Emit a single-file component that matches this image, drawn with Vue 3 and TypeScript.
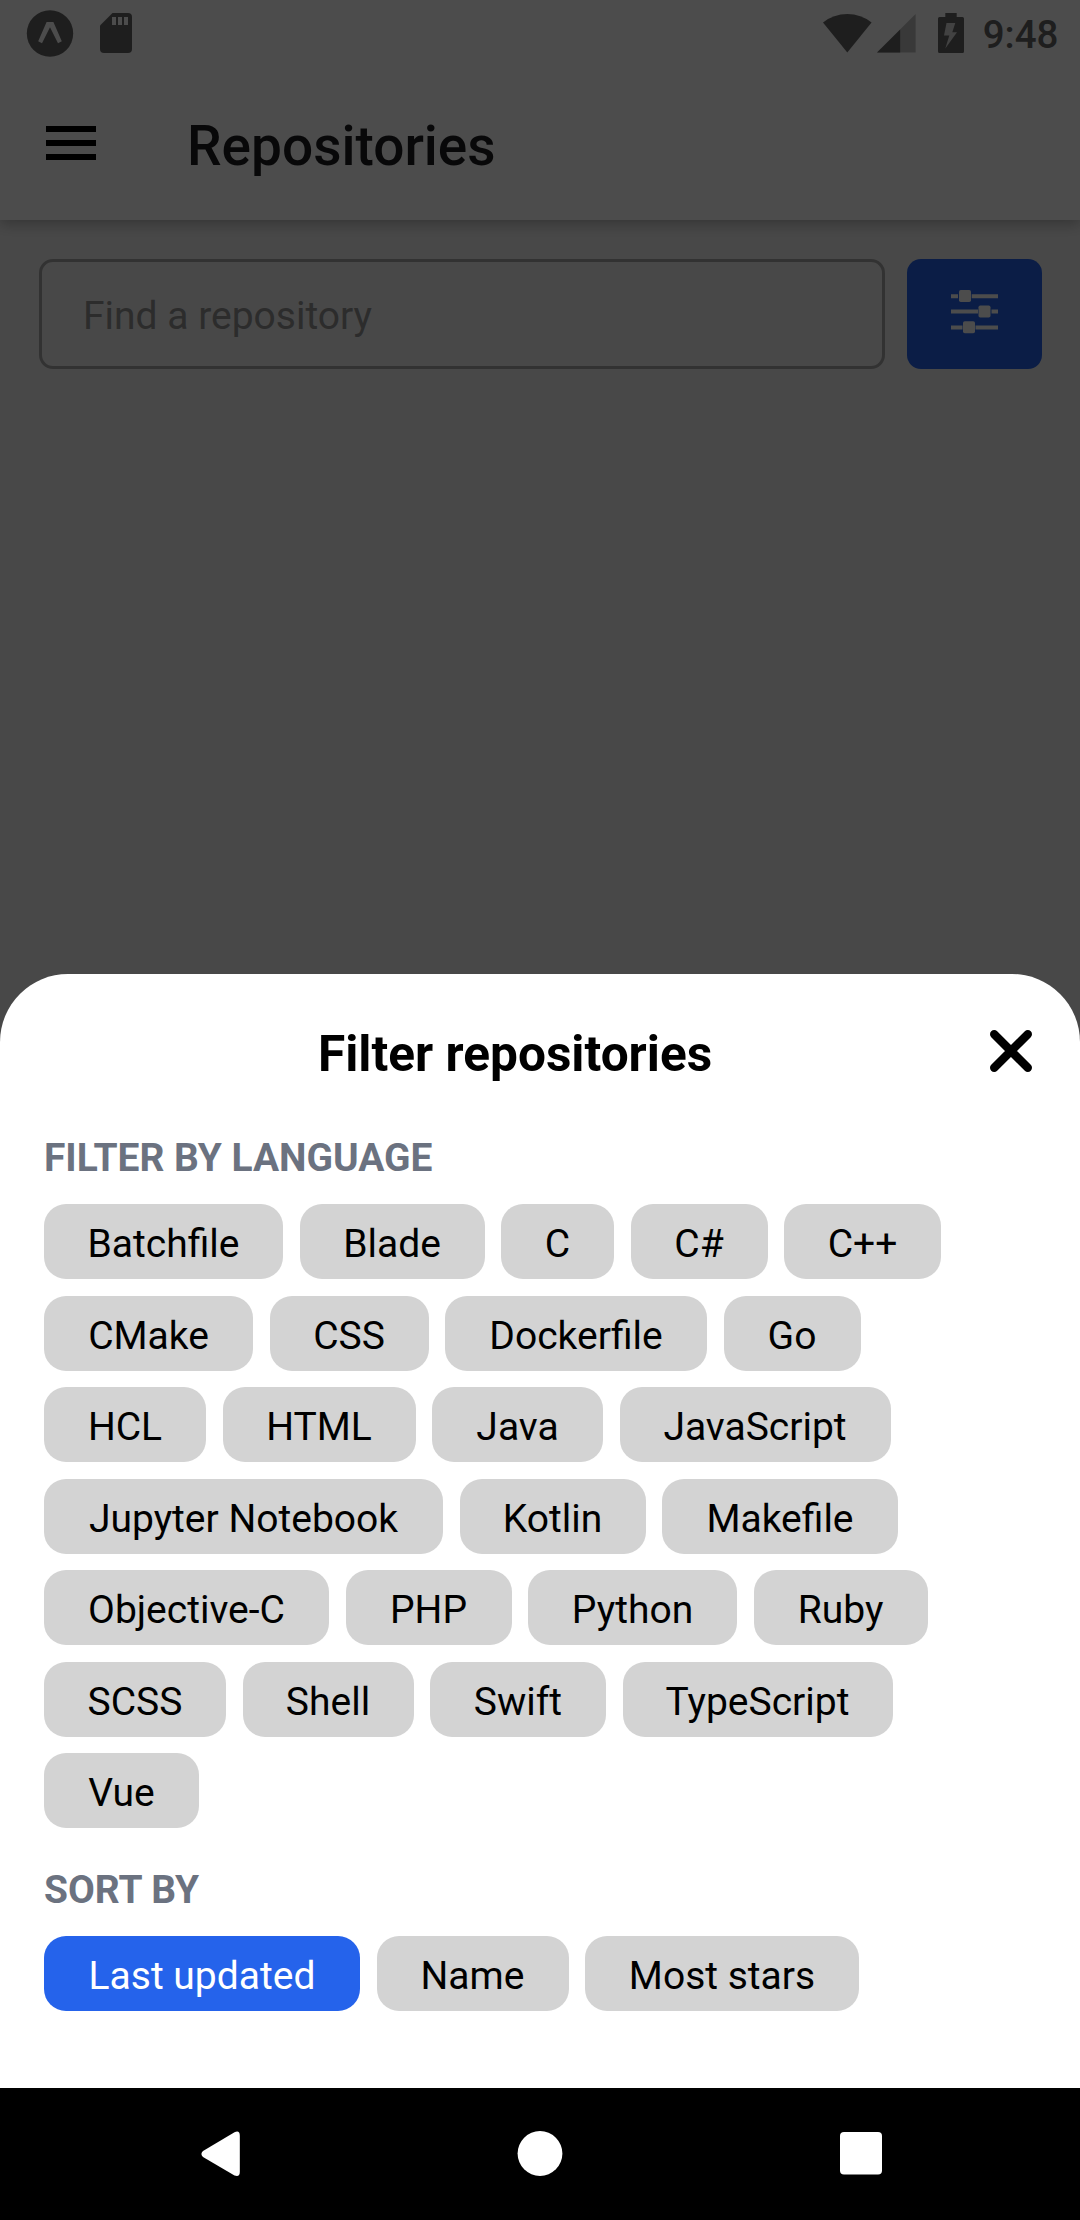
<script setup lang="ts">
import { ref } from 'vue'

interface Option {
  name: string
  width: number
}

const languages: Option[] = [
  { name: 'Batchfile', width: 239 },
  { name: 'Blade', width: 185 },
  { name: 'C', width: 113 },
  { name: 'C#', width: 137 },
  { name: 'C++', width: 157 },
  { name: 'CMake', width: 209 },
  { name: 'CSS', width: 159 },
  { name: 'Dockerfile', width: 262 },
  { name: 'Go', width: 137 },
  { name: 'HCL', width: 162 },
  { name: 'HTML', width: 193 },
  { name: 'Java', width: 171 },
  { name: 'JavaScript', width: 271 },
  { name: 'Jupyter Notebook', width: 399 },
  { name: 'Kotlin', width: 186 },
  { name: 'Makefile', width: 236 },
  { name: 'Objective-C', width: 285 },
  { name: 'PHP', width: 166 },
  { name: 'Python', width: 209 },
  { name: 'Ruby', width: 174 },
  { name: 'SCSS', width: 182 },
  { name: 'Shell', width: 171 },
  { name: 'Swift', width: 176 },
  { name: 'TypeScript', width: 270 },
  { name: 'Vue', width: 155 },
]
const sorts: Option[] = [
  { name: 'Last updated', width: 316 },
  { name: 'Name', width: 192 },
  { name: 'Most stars', width: 274 },
]

const language = ref<string | null>(null)
const sort = ref<string>('Last updated')
</script>

<template>
  <div class="screen">
    <header class="top">
      <div class="status">
        <svg class="expo" width="48" height="48" viewBox="0 0 48 48">
          <circle cx="24" cy="23.5" r="23.2" fill="#666" />
          <path d="M20.6 12h6.8l8.4 19.2-3.8 2L24 17.2l-8 16-3.8-2z" fill="#fff" />
        </svg>
        <svg class="sd" width="32" height="40" viewBox="0 0 32 40">
          <path d="M12.5 0H28q4 0 4 4v32q0 4-4 4H4q-4 0-4-4V12.5z" fill="#666" />
          <path d="M12 4h4v8h-4zM18 4h4v8h-4zM24 4h4v8h-4z" fill="#fff" />
        </svg>
        <svg class="wifi" width="49" height="39" viewBox="0 0 49 39">
          <path d="M24.3 38.5L0 8.5Q10.5 0 24.3 0T48.6 8.5z" fill="#666" />
        </svg>
        <svg class="signal" width="39" height="39" viewBox="0 0 39 39">
          <path d="M38.6 0V38.6H0z" fill="#c0c0c0" />
          <path d="M23.2 15.4V38.6H0z" fill="#666" />
        </svg>
        <svg class="battery" width="26" height="40" viewBox="0 0 26 40">
          <path d="M7.3 0h11.4v4H24.5q1.5 0 1.5 1.5v33q0 1.5-1.5 1.5h-23q-1.5 0-1.5-1.5v-33q0-1.5 1.5-1.5H7.3z" fill="#666" />
          <path d="M8.5 10h8.8l-3 9.2H19L7.3 35.5 11.3 22.500H6z" fill="#dcdcdc" />
        </svg>
        <span class="clock">9:48</span>
      </div>
      <div class="bar">
        <svg width="50" height="34" viewBox="0 0 50 34">
          <path d="M0 0h50v6H0zM0 14h50v6H0zM0 28h50v6H0z" fill="#000" />
        </svg>
        <h1>Repositories</h1>
      </div>
    </header>

    <div class="search">
      <div class="field">Find a repository</div>
      <div class="tune">
        <svg width="47" height="44" viewBox="0 0 47 44">
          <path d="M0 4.2h7v4H0zM20.7 4.2H47v4H20.7zM0 19.5h27v4H0zM40.5 19.5H47v4h-6.5zM0 35.5h11.5v4H0zM24.5 35.5H47v4H24.5z" fill="#fff" />
          <rect x="8" y="0" width="12" height="12" rx="1.8" fill="#fff" />
          <rect x="27.5" y="15.5" width="12" height="12" rx="1.8" fill="#fff" />
          <rect x="12" y="31.3" width="12" height="12" rx="1.8" fill="#fff" />
        </svg>
      </div>
    </div>

    <div class="overlay">
      <section class="sheet">
        <div class="sheet-head">
          <h2>Filter repositories</h2>
          <svg width="42" height="42" viewBox="0 0 42 42">
            <path d="M4.2 4.2L37.8 37.8M37.8 4.2L4.2 37.8" stroke="#000" stroke-width="8.4" stroke-linecap="round" />
          </svg>
        </div>
        <h3>FILTER BY LANGUAGE</h3>
        <div class="chips">
          <span
            v-for="item in languages"
            :key="item.name"
            class="chip"
            :class="{ active: item.name === language }"
            :style="{ width: item.width + 'px' }"
            @click="language = item.name"
          >{{ item.name }}</span>
        </div>
        <h3 class="second">SORT BY</h3>
        <div class="chips">
          <span
            v-for="item in sorts"
            :key="item.name"
            class="chip"
            :class="{ active: item.name === sort }"
            :style="{ width: item.width + 'px' }"
            @click="sort = item.name"
          >{{ item.name }}</span>
        </div>
      </section>
      <nav class="nav">
        <svg width="39" height="46" viewBox="0 0 39 46">
          <path d="M2 20L33.5 1.2Q38.8-1 38.8 4.5V41Q38.8 46.5 33.5 44.6L2 26Q-1.2 23 2 20z" fill="#fff" />
        </svg>
        <svg width="46" height="46" viewBox="0 0 46 46">
          <circle cx="23" cy="22.5" r="22.4" fill="#fff" />
        </svg>
        <svg class="recent" width="42" height="43" viewBox="0 0 42 43">
          <rect width="42" height="42.5" rx="4" fill="#fff" />
        </svg>
      </nav>
    </div>
  </div>
</template>

<style>
body {
  margin: 0;
}
</style>

<style scoped>
.screen {
  position: relative;
  width: 1080px;
  height: 2220px;
  overflow: hidden;
  background: #f2f2f2;
  font-family: Roboto, sans-serif;
}
svg {
  display: block;
  flex: none;
}
h1,
h2,
h3 {
  margin: 0;
}
.top {
  height: 220px;
  background: #fff;
  box-shadow: 0 4px 14px rgba(0, 0, 0, 0.28);
}
.status {
  display: flex;
  align-items: flex-start;
  height: 66px;
  box-sizing: border-box;
  padding: 10px 21.5px 0 26px;
}
.sd {
  margin: 3px 0 0 26px;
}
.wifi {
  margin: 4px 4.5px 0 auto;
}
.signal {
  margin: 4px 22px 0 0;
}
.battery {
  margin: 3px 19px 0 0;
}
.clock {
  margin-top: 2px;
  color: #666;
  font-size: 38.5px;
  font-weight: 500;
  line-height: 46px;
}
.bar {
  display: flex;
  align-items: flex-start;
  padding: 60px 46px 0;
}
.bar h1 {
  margin: -12px 0 0 91px;
  color: #1c1c1e;
  font-size: 55px;
  font-weight: 500;
  line-height: 64px;
}
.search {
  display: flex;
  gap: 22px;
  padding: 39px 38px 0 39px;
}
.field {
  flex: 1;
  height: 110px;
  box-sizing: border-box;
  padding: 2px 0 0 41px;
  border: 3px solid #a9a9a9;
  border-radius: 14px;
  color: #949494;
  font-size: 39px;
  line-height: 104px;
}
.tune {
  display: flex;
  justify-content: center;
  width: 135px;
  height: 110px;
  box-sizing: border-box;
  padding-top: 31px;
  border-radius: 14px;
  background: #2563eb;
}
.overlay {
  position: absolute;
  inset: 0;
  display: flex;
  flex-direction: column;
  justify-content: flex-end;
  background: rgba(0, 0, 0, 0.7);
}
.sheet {
  height: 1114px;
  box-sizing: border-box;
  padding: 56px 44px 0;
  border-radius: 68px 68px 0 0;
  background: #fff;
}
.sheet-head {
  display: flex;
  justify-content: space-between;
  height: 102px;
  padding: 0 4px 0 274px;
}
h2 {
  font-size: 49.6px;
  font-weight: 700;
  line-height: 48px;
}
h3 {
  height: 72px;
  box-sizing: border-box;
  padding-top: 1px;
  color: #6b7280;
  font-size: 38.9px;
  font-weight: 700;
  line-height: 50px;
}
h3.second {
  margin-top: 36px;
}
.chips {
  display: flex;
  flex-wrap: wrap;
  gap: 16.5px;
}
.chip {
  height: 75px;
  box-sizing: border-box;
  padding-top: 3px;
  border-radius: 22px;
  background: #d3d3d3;
  color: #000;
  font-size: 39px;
  line-height: 75px;
  text-align: center;
  white-space: nowrap;
}
.chip.active {
  background: #2563eb;
  color: #fff;
}
.nav {
  display: flex;
  justify-content: space-between;
  height: 132px;
  box-sizing: border-box;
  padding: 43px 198px 0 201px;
  background: #000;
}
.recent {
  margin-top: 1px;
}
</style>
